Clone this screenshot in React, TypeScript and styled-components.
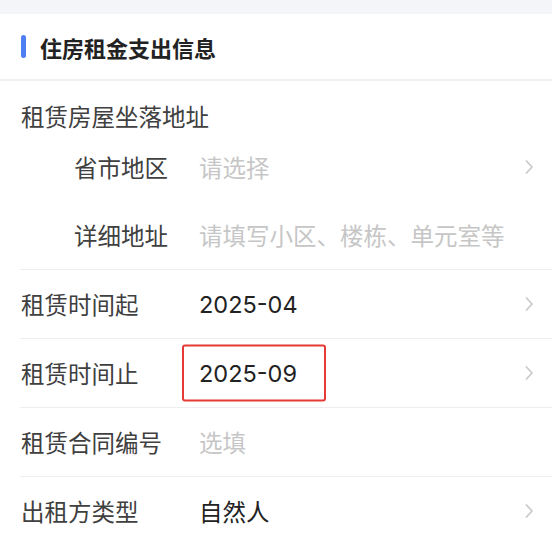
import React from 'react';
import styled, { createGlobalStyle } from 'styled-components';

const GlobalStyle = createGlobalStyle`
  html, body {
    margin: 0;
    padding: 0;
    background: #ffffff;
    font-family: Inter, "Noto Sans CJK SC", "Noto Sans", sans-serif;
  }
`;

const Page = styled.div`
  width: 552px;
  height: 548px;
  overflow: hidden;
  background: #ffffff;
`;

const TopBand = styled.div`
  height: 14px;
  background: #f4f5f8;
`;

const Header = styled.div`
  height: 65px;
  display: flex;
  align-items: center;
  gap: 14px;
  padding-left: 21px;
  border-bottom: 2px solid #f1f1f1;
`;

const Accent = styled.span`
  width: 5px;
  height: 23px;
  border-radius: 3px;
  background: #4d7ff2;
`;

const Title = styled.h2`
  margin: 0;
  font-family: "Noto Sans CJK SC", sans-serif;
  font-size: 22px;
  font-weight: 700;
  color: #222222;
  line-height: 1;
`;

const Group = styled.div`
  margin-left: 20px;
  border-bottom: 1px solid #eeeeee;
`;

const GroupLabel = styled.div`
  padding: 19px 0 0 1px;
  line-height: 33px;
  font-family: "Noto Sans CJK SC", sans-serif;
  font-size: 23.5px;
  color: #404040;
`;

const Row = styled.div<{ $sub?: boolean; $last?: boolean }>`
  display: flex;
  align-items: center;
  height: 68px;
  margin-left: ${p => (p.$sub ? 0 : 20)}px;
  padding-left: ${p => (p.$sub ? 54 : 1)}px;
  padding-right: 18px;
  border-bottom: ${p => (p.$sub || p.$last ? 'none' : '1px solid #eeeeee')};
`;

const Label = styled.span<{ $sub?: boolean }>`
  flex: 0 0 ${p => (p.$sub ? 125 : 178)}px;
  font-family: "Noto Sans CJK SC", sans-serif;
  font-size: 23.5px;
  color: #404040;
`;

const Value = styled.span<{ $placeholder?: boolean }>`
  position: relative;
  flex: 1;
  font-size: 23.5px;
  color: ${p => (p.$placeholder ? '#c6c6c6' : '#222222')};
  white-space: nowrap;
`;

const Mark = styled.span`
  position: absolute;
  left: -17px;
  top: 50%;
  width: 144px;
  height: 57px;
  transform: translateY(-50%);
  box-sizing: border-box;
  border: 2px solid #e53a35;
  border-radius: 3px;
  pointer-events: none;
`;

const Chevron = () => (
  <svg width="10" height="16" viewBox="0 0 10 16" fill="none">
    <path d="M2.5 2 L8 8 L2.5 14" stroke="#c9c9c9" strokeWidth="1.7" strokeLinecap="round" strokeLinejoin="round" />
  </svg>
);

type Field = {
  label: string;
  value: string;
  placeholder?: boolean;
  arrow?: boolean;
  marked?: boolean;
};

const fields: Field[] = [
  { label: '租赁时间起', value: '2025-04', arrow: true },
  { label: '租赁时间止', value: '2025-09', arrow: true, marked: true },
  { label: '租赁合同编号', value: '选填', placeholder: true },
  { label: '出租方类型', value: '自然人', arrow: true },
];

export default function App() {
  return (
    <Page>
      <GlobalStyle />
      <TopBand />
      <Header>
        <Accent />
        <Title>住房租金支出信息</Title>
      </Header>

      <Group>
        <GroupLabel>租赁房屋坐落地址</GroupLabel>
        <Row $sub>
          <Label $sub>省市地区</Label>
          <Value $placeholder>请选择</Value>
          <Chevron />
        </Row>
        <Row $sub>
          <Label $sub>详细地址</Label>
          <Value $placeholder>请填写小区、楼栋、单元室等</Value>
        </Row>
      </Group>

      {fields.map((f, i) => (
        <Row key={f.label} $last={i === fields.length - 1}>
          <Label>{f.label}</Label>
          <Value $placeholder={f.placeholder}>
            {f.value}
            {f.marked && <Mark />}
          </Value>
          {f.arrow && <Chevron />}
        </Row>
      ))}
    </Page>
  );
}
